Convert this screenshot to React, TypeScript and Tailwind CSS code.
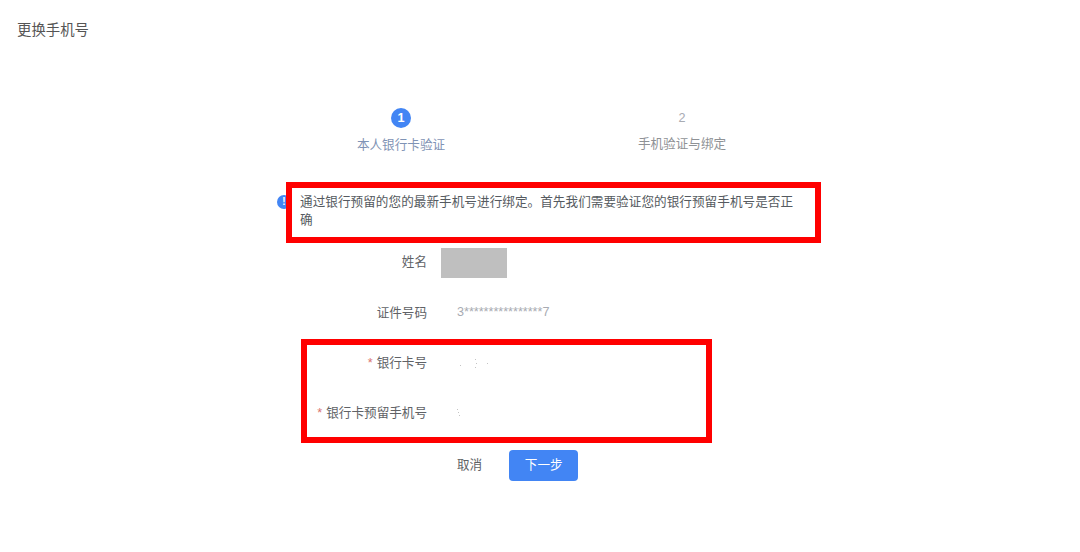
import React from "react";

const font = { fontFamily: '"Liberation Sans", "Noto Sans CJK SC", sans-serif' };

function Row({ label, required, children }: { label: string; required?: boolean; children?: React.ReactNode }) {
  return (
    <div className="flex h-[50.4px] items-center">
      <div className="w-[127px] text-right text-[12.6px] leading-[18px] text-[#606266]">
        {required && <span className="mr-[4px] text-[#d9756f]">*</span>}
        {label}
      </div>
      <div className="ml-[14px] flex items-center text-[12.6px] text-[#a8abb2]">{children}</div>
    </div>
  );
}

function Specks({ points, w }: { points: [number, number][]; w: number }) {
  return (
    <svg width={w} height="16" viewBox={`0 0 ${w} 16`}>
      {points.map(([x, y], i) => (
        <rect key={i} x={x} y={y} width="1" height="1" fill="#c4c4c4" />
      ))}
    </svg>
  );
}

export default function App() {
  return (
    <div className="relative h-[552px] w-[1080px] overflow-hidden bg-white" style={font}>
      <div className="pl-[17px] pt-[20px] text-[14.4px] leading-[20px] text-[#555555]">更换手机号</div>

      <div className="mt-[68px] flex pl-[301px]">
        <div className="flex w-[200px] flex-col items-center">
          <div className="flex h-[20px] w-[20px] items-center justify-center rounded-full bg-[#4285f4] text-[12.6px] font-bold text-white">
            1
          </div>
          <div className="mt-[8px] text-[12.6px] leading-[18px] text-[#7f93b5]">本人银行卡验证</div>
        </div>
        <div className="ml-[81px] flex w-[200px] flex-col items-center">
          <div className="flex h-[20px] w-[20px] items-center justify-center text-[12.6px] text-[#a8abb2]">2</div>
          <div className="mt-[7px] text-[12.6px] leading-[18px] text-[#8f9296]">手机验证与绑定</div>
        </div>
      </div>

      <div className="ml-[277px] mt-[39px] flex w-[523px] items-start">
        <div className="mt-[2px] flex h-[14px] w-[14px] shrink-0 items-center justify-center rounded-full bg-[#4285f4] text-[10px] font-bold leading-none text-white">
          !
        </div>
        <div className="ml-[9px] w-[500px] text-[12.6px] leading-[18px] tracking-[0.05px] text-[#555a60]">
          通过银行预留的您的最新手机号进行绑定。首先我们需要验证您的银行预留手机号是否正确
        </div>
      </div>

      <div className="ml-[300px] mt-[8px]">
        <Row label="姓名">
          <div className="mt-[2px] h-[30px] w-[66px] bg-[#bfbfbf]" />
        </Row>
        <Row label="证件号码">
          <span className="pl-[16px] text-[12.6px]">3****************7</span>
        </Row>
        <Row label="银行卡号" required>
          <span className="pl-[19px]">
            <Specks w={30} points={[[0, 10], [15, 4], [16, 8], [15, 12], [27, 8]]} />
          </span>
        </Row>
        <Row label="银行卡预留手机号" required>
          <span className="pl-[16px]">
            <Specks w={6} points={[[0, 4], [1, 7], [2, 10]]} />
          </span>
        </Row>
      </div>

      <div className="ml-[441px] mt-[11.4px] flex items-center">
        <button className="h-[31px] px-[16px] text-[12.6px] text-[#606266]">取消</button>
        <button className="ml-[11px] h-[31px] w-[69px] rounded-[4px] bg-[#4285f4] text-[12.6px] text-white">下一步</button>
      </div>

      <div className="absolute left-[286px] top-[182px] h-[61px] w-[535px] border-[6px] border-[#ff0000]" />
      <div className="absolute left-[301px] top-[339px] h-[104px] w-[411px] border-[6px] border-[#ff0000]" />
    </div>
  );
}
